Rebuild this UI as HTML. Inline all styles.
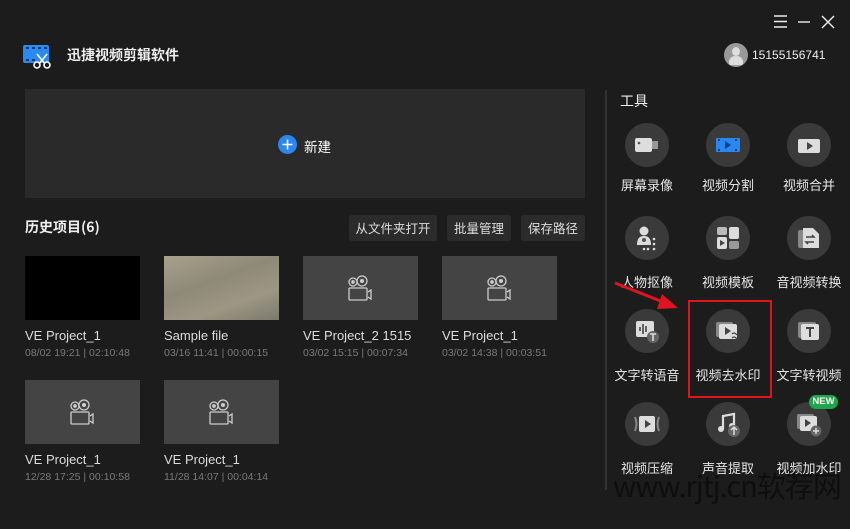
<!DOCTYPE html>
<html><head><meta charset="utf-8"><style>
*{margin:0;padding:0;box-sizing:border-box}
body{width:850px;height:529px;background:#1c1c1c;position:relative;overflow:hidden;font-family:"Liberation Sans","Noto Sans CJK SC",sans-serif;color:#e6e6e6}
.a{position:absolute}
.cn{font-family:"Noto Sans CJK SC",sans-serif}
.th{position:absolute;width:115px;height:64px;background:#444;display:flex;align-items:center;justify-content:center}
.t{position:absolute;font-size:13px;color:#ddd;white-space:nowrap}
.d{position:absolute;font-size:10.5px;color:#7a7a7a;white-space:nowrap}
.btn{position:absolute;top:215px;height:26px;background:#2b2b2b;border-radius:3px;font-size:12.5px;color:#ddd;text-align:center;line-height:26px}
.c{position:absolute;width:44px;height:44px;border-radius:50%;background:#3a3a3a;display:flex;align-items:center;justify-content:center}
.l{position:absolute;width:90px;text-align:center;font-size:13px;color:#e6e6e6;white-space:nowrap}
</style></head><body>
<div class="a cn" style="left:613px;top:465px;font-size:29px;line-height:40px;color:#0e0e0e;letter-spacing:-1px;white-space:nowrap">www.rjtj.cn软荐网</div>
<svg class="a" style="left:770px;top:12px" width="66" height="20"><g stroke="#eee" stroke-width="1.4"><path d="M4 4h13M4 9.5h13M4 15h13"/><path d="M28 10h12"/><path d="M52 4l12 12M64 4L52 16"/></g></svg>
<svg class="a" style="left:23px;top:44px" width="30" height="26"><rect x="0" y="1" width="26" height="18" rx="2" fill="#2a8af0"/><g fill="#0b3a78"><rect x="3" y="3" width="3" height="2"/><rect x="9" y="3" width="3" height="2"/><rect x="15" y="3" width="3" height="2"/><rect x="21" y="3" width="3" height="2"/><rect x="3" y="15" width="3" height="2"/><rect x="9" y="15" width="3" height="2"/></g><g stroke="#fff" stroke-width="1.6" fill="#1c1c1c"><path d="M14 10l8 10M24 10l-8 10"/><circle cx="14" cy="21" r="3"/><circle cx="24" cy="21" r="3"/></g></svg>
<div class="a cn" style="left:67px;top:45px;font-size:14px;font-weight:bold;color:#eee">迅捷视频剪辑软件</div>
<div class="a" style="left:724px;top:43px;width:24px;height:24px;border-radius:50%;background:#999;overflow:hidden"><div class="a" style="left:8px;top:4px;width:8px;height:9px;border-radius:50%;background:#ddd"></div><div class="a" style="left:5px;top:13px;width:14px;height:9px;border-radius:6px 6px 2px 2px;background:#ddd"></div></div>
<div class="a" style="left:752px;top:48px;font-size:12px;color:#eee">15155156741</div>
<div class="a" style="left:25px;top:89px;width:560px;height:109px;background:#2a2a2a"></div>
<div class="a" style="left:278px;top:135px;width:19px;height:19px;border-radius:50%;background:#2b87f0"></div>
<svg class="a" style="left:278px;top:135px" width="19" height="19"><path d="M9.5 4.5v10M4.5 9.5h10" stroke="#fff" stroke-width="1.6"/></svg>
<div class="a cn" style="left:304px;top:136px;font-size:13.5px;color:#fff">新建</div>
<div class="a cn" style="left:25px;top:217px;font-size:14px;font-weight:bold;color:#eee">历史项目(6)</div>
<div class="btn cn" style="left:349px;width:88px">从文件夹打开</div>
<div class="btn cn" style="left:447px;width:64px">批量管理</div>
<div class="btn cn" style="left:521px;width:64px">保存路径</div>

<div class="th" style="left:25px;top:256px;background:#000"></div>
<div class="th" style="left:164px;top:256px;background:linear-gradient(160deg,#a8a18c,#8e8a78 40%,#9d9683 70%,#7a7a6c)"></div>
<svg width="0" height="0" style="position:absolute"><defs><g id="cam" fill="none" stroke="#ccc" stroke-width="1.3"><circle cx="6" cy="7" r="4"/><circle cx="6" cy="7" r="1.2" fill="#ccc"/><circle cx="15" cy="6" r="5"/><circle cx="15" cy="6" r="1.4" fill="#ccc"/><rect x="2" y="13" width="18" height="12" rx="1"/><path d="M21 17l3-2v9l-3-2"/></g></defs></svg>
<div class="th" style="left:303px;top:256px"><svg width="27" height="27"><use href="#cam"/></svg></div>
<div class="th" style="left:442px;top:256px"><svg width="27" height="27"><use href="#cam"/></svg></div>
<div class="th" style="left:25px;top:380px"><svg width="27" height="27"><use href="#cam"/></svg></div>
<div class="th" style="left:164px;top:380px"><svg width="27" height="27"><use href="#cam"/></svg></div>

<div class="t" style="left:25px;top:328px">VE Project_1</div><div class="d" style="left:25px;top:347px">08/02 19:21 | 02:10:48</div>
<div class="t" style="left:164px;top:328px">Sample file</div><div class="d" style="left:164px;top:347px">03/16 11:41 | 00:00:15</div>
<div class="t" style="left:303px;top:328px">VE Project_2 1515</div><div class="d" style="left:303px;top:347px">03/02 15:15 | 00:07:34</div>
<div class="t" style="left:442px;top:328px">VE Project_1</div><div class="d" style="left:442px;top:347px">03/02 14:38 | 00:03:51</div>
<div class="t" style="left:25px;top:452px">VE Project_1</div><div class="d" style="left:25px;top:471px">12/28 17:25 | 00:10:58</div>
<div class="t" style="left:164px;top:452px">VE Project_1</div><div class="d" style="left:164px;top:471px">11/28 14:07 | 00:04:14</div>

<div class="a" style="left:605px;top:90px;width:2px;height:400px;background:#333"></div>
<div class="a cn" style="left:620px;top:91px;font-size:14px;color:#eee">工具</div>

<div class="c" style="left:625px;top:123px"><svg width="26" height="20"><rect x="1" y="3" width="17" height="14" rx="2" fill="#ddd"/><rect x="18" y="6" width="6" height="8" fill="#999"/><circle cx="5" cy="8" r="1.3" fill="#555"/></svg></div>
<div class="c" style="left:706px;top:123px"><svg width="26" height="20"><rect x="1" y="3" width="24" height="14" rx="1" fill="#2b87f0"/><g fill="#0e3f86"><rect x="3" y="4" width="2" height="2"/><rect x="3" y="14" width="2" height="2"/><rect x="20" y="4" width="2" height="2"/><rect x="20" y="14" width="2" height="2"/></g><path d="M10 6v8l6-4z" fill="#0e3f86"/></svg></div>
<div class="c" style="left:787px;top:123px"><svg width="26" height="20"><rect x="2" y="4" width="22" height="14" rx="2" fill="#ddd"/><path d="M11 7v8l6-4z" fill="#444"/></svg></div>
<div class="l cn" style="left:602px;top:175px">屏幕录像</div>
<div class="l cn" style="left:683px;top:175px">视频分割</div>
<div class="l cn" style="left:764px;top:175px">视频合并</div>
<div class="c" style="left:625px;top:216px"><svg width="26" height="26"><circle cx="10" cy="6" r="4.5" fill="#ddd"/><path d="M3 20c0-7 3-9 7-9s7 2 7 9z" fill="#ddd"/><g fill="#ddd"><circle cx="20" cy="14" r="1.3"/><circle cx="20" cy="19" r="1.3"/><circle cx="14" cy="24" r="1.3"/><circle cx="20" cy="24" r="1.3"/><circle cx="10" cy="24" r="1.3"/></g><circle cx="10" cy="15" r="2" fill="#555"/></svg></div>
<div class="c" style="left:706px;top:216px"><svg width="24" height="24"><rect x="1" y="1" width="10" height="8" rx="2" fill="#bbb"/><rect x="13" y="1" width="10" height="12" rx="2" fill="#ddd"/><rect x="1" y="11" width="10" height="12" rx="2" fill="#ddd"/><rect x="13" y="15" width="10" height="8" rx="2" fill="#999"/><path d="M4 14v6l5-3z" fill="#444"/></svg></div>
<div class="c" style="left:787px;top:216px"><svg width="24" height="24"><rect x="1" y="4" width="14" height="18" rx="2" fill="#888"/><path d="M6 2h10l6 6v14H6z" fill="#ddd"/><path d="M9 11h8l-2-2M17 16H9l2 2" stroke="#444" stroke-width="1.5" fill="none"/></svg></div>
<div class="l cn" style="left:602px;top:272px">人物抠像</div>
<div class="l cn" style="left:683px;top:272px">视频模板</div>
<div class="l cn" style="left:764px;top:272px">音视频转换</div>
<div class="c" style="left:625px;top:309px"><svg width="26" height="26"><rect x="2" y="3" width="18" height="16" rx="2" fill="#ddd"/><g stroke="#444" stroke-width="1.6"><path d="M6 9v4M9 6v10M12 8v6"/></g><circle cx="19" cy="19" r="6" fill="#666"/><path d="M16 16h6M19 16v7" stroke="#ddd" stroke-width="1.6"/></svg></div>
<div class="c" style="left:706px;top:309px"><svg width="26" height="24"><rect x="1" y="3" width="17" height="15" rx="2" fill="#888"/><rect x="4" y="5" width="18" height="15" rx="2" fill="#ddd"/><path d="M10 8v8l6-4z" fill="#444"/><path d="M17 15q2-2 4 0t4 0M17 19q2-2 4 0t4 0" stroke="#444" stroke-width="1.2" fill="none"/></svg></div>
<div class="c" style="left:787px;top:309px"><svg width="26" height="24"><rect x="2" y="3" width="18" height="16" rx="2" fill="#888"/><rect x="5" y="5" width="18" height="16" rx="2" fill="#ddd"/><path d="M10 9h8M14 9v9" stroke="#444" stroke-width="2"/></svg></div>
<div class="l cn" style="left:602px;top:365px">文字转语音</div>
<div class="l cn" style="left:683px;top:365px">视频去水印</div>
<div class="l cn" style="left:764px;top:365px">文字转视频</div>
<div class="c" style="left:625px;top:402px"><svg width="28" height="22"><path d="M2 4q3 7 0 14M26 4q-3 7 0 14" stroke="#888" stroke-width="2" fill="none"/><rect x="6" y="3" width="16" height="16" rx="2" fill="#ddd"/><path d="M12 7v8l6-4z" fill="#444"/></svg></div>
<div class="c" style="left:706px;top:402px"><svg width="26" height="26"><path d="M8 18V5l11-2v12" stroke="#ddd" stroke-width="2.2" fill="none"/><circle cx="6" cy="18" r="3" fill="#ddd"/><circle cx="17" cy="15" r="3" fill="#ddd"/><circle cx="19" cy="20" r="6" fill="#666"/><path d="M19 24v-7M16 19l3-3 3 3" stroke="#ddd" stroke-width="1.5" fill="none"/></svg></div>
<div class="c" style="left:787px;top:402px"><svg width="26" height="26"><rect x="1" y="3" width="17" height="15" rx="2" fill="#888"/><rect x="4" y="5" width="17" height="15" rx="2" fill="#ddd"/><path d="M9 8v8l6-4z" fill="#444"/><circle cx="20" cy="20" r="5.5" fill="#666"/><path d="M17 20h6M20 17v6" stroke="#ddd" stroke-width="1.5"/></svg></div>
<div class="a" style="left:809px;top:395px;width:29px;height:14px;border-radius:7px;background:#1fa64a;color:#fff;font-size:9.5px;font-weight:bold;text-align:center;line-height:14px">NEW</div>
<div class="l cn" style="left:602px;top:458px">视频压缩</div>
<div class="l cn" style="left:683px;top:458px">声音提取</div>
<div class="l cn" style="left:764px;top:458px">视频加水印</div>

<div class="a" style="left:688px;top:300px;width:84px;height:98px;border:2px solid #e0141e"></div>
<svg class="a" style="left:610px;top:278px" width="72" height="36"><path d="M5 5L58 26" stroke="#e0141e" stroke-width="3"/><path d="M52 16l16 14-21 1z" fill="#e0141e"/></svg>
</body></html>
